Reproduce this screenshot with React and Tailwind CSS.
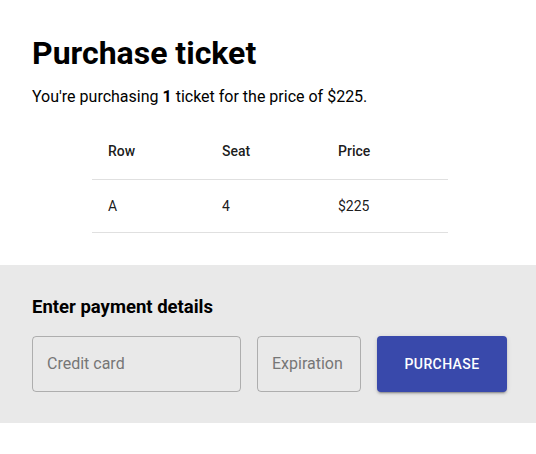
export default function App() {
  return (
    <div className="w-[536px] bg-white text-black font-['Roboto',sans-serif]">
      <div className="px-8 pt-[33px]">
        <h1 className="text-[32px] leading-[40px] font-bold">Purchase ticket</h1>
        <p className="mt-3 text-base leading-6">
          You're purchasing <b className="font-bold">1</b> ticket for the price of $225.
        </p>
        <table className="mt-[14px] ml-[60px] w-[356px] border-collapse text-sm text-black/90">
          <thead>
            <tr className="border-b border-[#e0e0e0]">
              <th className="w-[114px] p-4 text-left font-medium leading-6">Row</th>
              <th className="w-[116px] p-4 text-left font-medium leading-6">Seat</th>
              <th className="p-4 text-left font-medium leading-6">Price</th>
            </tr>
          </thead>
          <tbody>
            <tr className="border-b border-[#e0e0e0]">
              <td className="p-4 leading-5">A</td>
              <td className="p-4 leading-5">4</td>
              <td className="p-4 leading-5">$225</td>
            </tr>
          </tbody>
        </table>
      </div>

      <div className="mt-8 bg-[#e9e9e9] px-8 pt-8 pb-[31px]">
        <h2 className="text-[18.5px] leading-[21.6px] font-bold">Enter payment details</h2>
        <div className="mt-[17px] flex gap-4">
          <input
            placeholder="Credit card"
            className="h-14 w-[209px] shrink-0 rounded border border-black/25 bg-transparent px-[14px] text-base text-black placeholder:text-[#767676] outline-none"
          />
          <input
            placeholder="Expiration"
            className="h-14 w-[104px] shrink-0 rounded border border-black/25 bg-transparent px-[14px] text-base text-black placeholder:text-[#767676] outline-none"
          />
          <button className="h-14 w-[130px] shrink-0 rounded bg-[#3949ab] text-sm font-medium tracking-[0.4px] text-white shadow-[0_3px_1px_-2px_rgba(0,0,0,0.2),0_2px_2px_0_rgba(0,0,0,0.14),0_1px_5px_0_rgba(0,0,0,0.12)]">
            PURCHASE
          </button>
        </div>
      </div>
    </div>
  );
}
